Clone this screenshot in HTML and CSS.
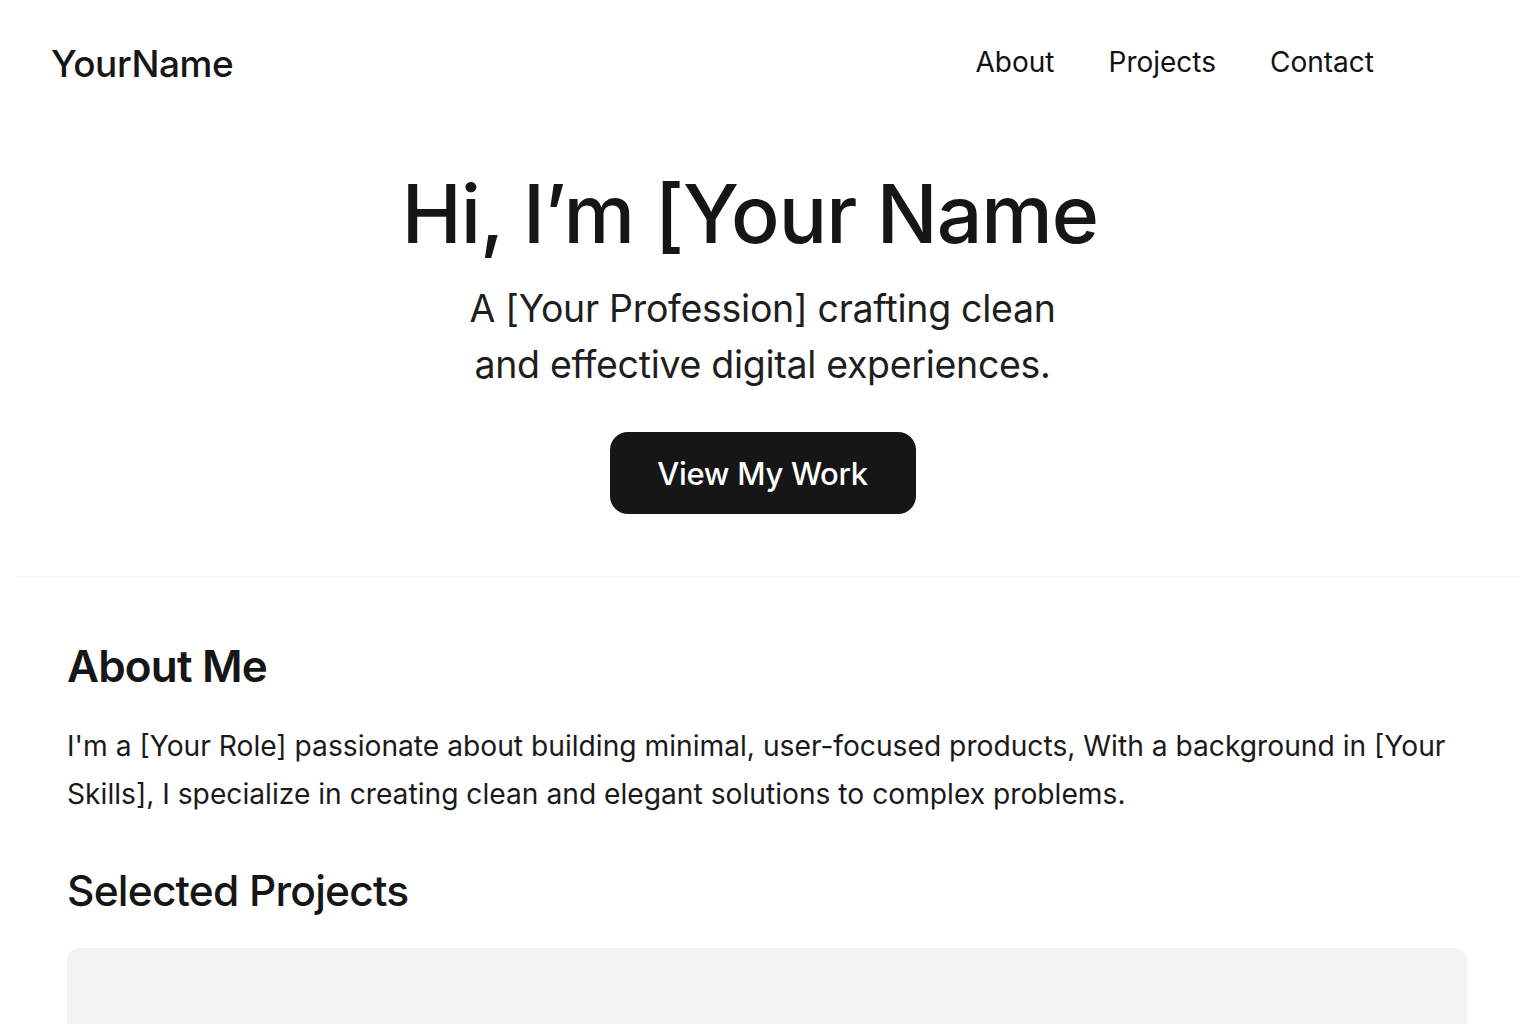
FILE: index.html
```html
<!DOCTYPE html>
<html lang="en">
<head>
<meta charset="utf-8">
<title>YourName</title>
<link rel="stylesheet" href="styles.css">
</head>
<body>
<header class="site-header">
  <div class="logo">YourName</div>
  <nav class="nav">
    <a href="#about">About</a>
    <a href="#projects">Projects</a>
    <a href="#contact">Contact</a>
  </nav>
</header>
<section class="hero">
  <h1 class="hero-title">Hi, I’m [Your Name</h1>
  <p class="hero-sub">A [Your Profession] crafting clean<br>and effective digital experiences.</p>
  <a class="btn" href="#projects">View My Work</a>
</section>
<main class="content">
  <section id="about" class="about">
    <h2>About Me</h2>
    <p>I'm a [Your Role] passionate about building minimal, user-focused products, With a background in [Your Skills], I specialize in creating clean and elegant solutions to complex problems.</p>
  </section>
  <section id="projects" class="projects">
    <h2>Selected Projects</h2>
    <div class="project-card"></div>
  </section>
</main>
</body>
</html>
```
FILE: styles.css
```css
* { box-sizing: border-box; }
html, body { margin: 0; padding: 0; background: #fff; }
body {
  font-family: Inter, "Noto Sans", sans-serif;
  color: #161616;
  width: 1536px;
  height: 1024px;
  overflow: hidden;
}
.site-header {
  display: flex;
  justify-content: space-between;
  align-items: flex-start;
  padding: 40px 162px 0 51px;
  height: 124px;
}
.logo {
  font-size: 37px;
  font-weight: 500;
  letter-spacing: -0.4px;
  line-height: 48px;
}
.nav {
  display: flex;
  gap: 54px;
}
.nav a {
  color: #111;
  text-decoration: none;
  font-size: 28px;
  line-height: 44px;
}
.hero {
  display: flex;
  flex-direction: column;
  align-items: center;
  text-align: center;
  padding: 40px 11px 62px 0;
  border-bottom: 1px solid #f6f6f6;
  margin: 0 16px;
}
.hero-title {
  margin: 0;
  font-size: 80.5px;
  font-weight: 500;
  letter-spacing: -1px;
  line-height: 100px;
  padding-right: 25px;
}
.hero-sub {
  margin: 17px 0 0;
  font-size: 37.5px;
  line-height: 56px;
  font-weight: 400;
  color: #1e1e1e;
  letter-spacing: -0.3px;
}
.btn {
  margin-top: 39px;
  display: inline-flex;
  align-items: center;
  justify-content: center;
  width: 306px;
  height: 82px;
  background: #161616;
  color: #fff;
  border-radius: 18px;
  font-size: 31px;
  font-weight: 500;
  text-decoration: none;
  letter-spacing: -0.3px;
}
.content {
  padding: 53px 69px 0 67px;
}
.about h2, .projects h2 {
  margin: 0;
  font-size: 44px;
  font-weight: 600;
  letter-spacing: -0.8px;
  line-height: 72px;
}
.about p {
  margin: 20px 0 0;
  font-size: 28.2px;
  line-height: 48px;
  color: #1a1a1a;
  letter-spacing: 0;
}
.projects { margin-top: 37px; }
.projects h2 { font-weight: 500; font-size: 42.5px; }
.project-card {
  margin-top: 21px;
  height: 240px;
  background: #f4f4f4;
  border-radius: 12px;
}
```
